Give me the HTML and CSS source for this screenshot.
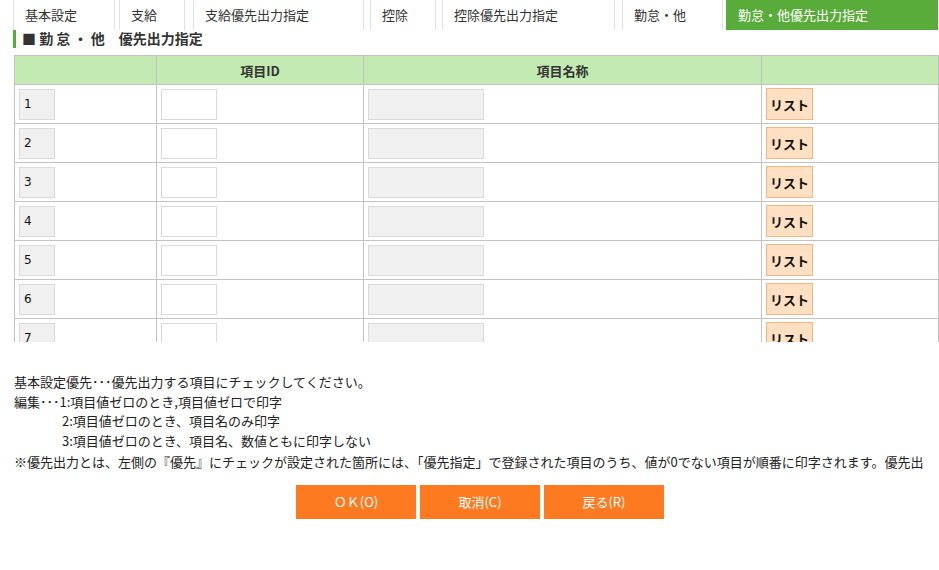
FILE: index.html
```html
<!DOCTYPE html>
<html lang="ja">
<head>
<meta charset="utf-8">
<title>勤怠・他優先出力指定</title>
<link rel="stylesheet" href="styles.css">
</head>
<body>
<nav class="tabs">
  <div class="tab t1">基本設定</div>
  <div class="tab t2">支給</div>
  <div class="tab t3">支給優先出力指定</div>
  <div class="tab t4">控除</div>
  <div class="tab t5">控除優先出力指定</div>
  <div class="tab t6">勤怠・他</div>
  <div class="tab t7 active">勤怠・他優先出力指定</div>
</nav>
<h1 class="title">■ 勤 怠 ・ 他　優先出力指定</h1>
<div class="grid-wrap">
  <table class="grid">
    <thead>
      <tr>
        <th class="c1"></th>
        <th class="c2">項目ID</th>
        <th class="c3">項目名称</th>
        <th class="c4"></th>
      </tr>
    </thead>
    <tbody>
      <tr><td><span class="no">1</span></td><td><span class="idbox"></span></td><td><span class="namebox"></span></td><td><button class="list">リスト</button></td></tr>
      <tr><td><span class="no">2</span></td><td><span class="idbox"></span></td><td><span class="namebox"></span></td><td><button class="list">リスト</button></td></tr>
      <tr><td><span class="no">3</span></td><td><span class="idbox"></span></td><td><span class="namebox"></span></td><td><button class="list">リスト</button></td></tr>
      <tr><td><span class="no">4</span></td><td><span class="idbox"></span></td><td><span class="namebox"></span></td><td><button class="list">リスト</button></td></tr>
      <tr><td><span class="no">5</span></td><td><span class="idbox"></span></td><td><span class="namebox"></span></td><td><button class="list">リスト</button></td></tr>
      <tr><td><span class="no">6</span></td><td><span class="idbox"></span></td><td><span class="namebox"></span></td><td><button class="list">リスト</button></td></tr>
      <tr><td><span class="no">7</span></td><td><span class="idbox"></span></td><td><span class="namebox"></span></td><td><button class="list">リスト</button></td></tr>
    </tbody>
  </table>
</div>
<div class="notes">
  <p>基本設定優先･･･優先出力する項目にチェックしてください。</p>
  <p>編集･･･1:項目値ゼロのとき,項目値ゼロで印字</p>
  <p class="indent">2:項目値ゼロのとき、項目名のみ印字</p>
  <p class="indent">3:項目値ゼロのとき、項目名、数値ともに印字しない</p>
  <p class="remark">※優先出力とは、左側の『優先』にチェックが設定された箇所には、「優先指定」で登録された項目のうち、値が0でない項目が順番に印字されます。優先出</p>
</div>
<div class="actions">
  <button class="act">ＯＫ(O)</button>
  <button class="act">取消(C)</button>
  <button class="act">戻る(R)</button>
</div>
</body>
</html>
```

FILE: styles.css
```css
html, body {
  margin: 0;
  padding: 0;
  background: #fff;
  width: 939px;
  height: 570px;
  overflow: hidden;
}
body {
  font-family: "Noto Sans CJK JP", "Noto Sans", sans-serif;
  color: #222;
  font-size: 12px;
}
.tabs {
  display: flex;
  height: 30px;
  padding-left: 13px;
}
.tab {
  box-sizing: border-box;
  height: 30px;
  line-height: 29px;
  padding-left: 11px;
  font-size: 13px;
  color: #333;
  border-left: 1px solid #e2e2e2;
  border-right: 1px solid #e2e2e2;
  white-space: nowrap;
}
.t1 { width: 102px; }
.t2 { width: 66px; margin-left: 4px; }
.t3 { width: 171px; margin-left: 8px; }
.t4 { width: 66px; margin-left: 6px; }
.t5 { width: 173px; margin-left: 6px; }
.t6 { width: 101px; margin-left: 7px; }
.t7 { width: 212px; margin-left: 3px; }
.tab.active {
  background: #5aac3a;
  color: #fff;
  border-color: #5aac3a;
}
.title {
  margin: 0 0 0 13px;
  height: 18px;
  line-height: 17px;
  padding-left: 6px;
  border-left: 3px solid #5aac3a;
  font-size: 14px;
  font-weight: bold;
  color: #333;
}
.grid-wrap {
  margin: 7px 0 0 14px;
  width: 925px;
  height: 287px;
  overflow: hidden;
}
.grid {
  border-collapse: collapse;
  width: 925px;
  table-layout: fixed;
}
.grid th, .grid td {
  border: 1px solid #c3c3c3;
  padding: 0 4px;
  text-align: left;
}
.grid th {
  background: #c4eab4;
  height: 28px;
  font-size: 13px;
  font-weight: bold;
  color: #333;
  text-align: center;
}
.c1 { width: 133px; }
.c2 { width: 198px; }
.c3 { width: 389px; }
.c4 { width: 168px; }
.grid td {
  height: 38px;
}
.no, .idbox, .namebox {
  display: block;
  box-sizing: border-box;
  height: 31px;
  border: 1px solid #dadada;
}
.no {
  width: 36px;
  background: #f0f0f0;
  font-family: "DejaVu Sans", sans-serif;
  font-size: 12px;
  line-height: 29px;
  padding-left: 4px;
  color: #111;
}
.idbox {
  width: 56px;
  background: #fff;
}
.namebox {
  width: 116px;
  background: #f0f0f0;
}
.list {
  display: block;
  box-sizing: border-box;
  width: 47px;
  height: 32px;
  padding: 0;
  background: #ffe0c2;
  border: 1px solid #f2b684;
  font-family: "Noto Sans CJK JP", sans-serif;
  font-size: 13px;
  font-weight: bold;
  color: #111;
}
.notes {
  margin: 30px 0 0 14px;
  font-size: 13px;
  line-height: 19.5px;
  color: #222;
  white-space: nowrap;
  overflow: hidden;
  width: 925px;
}
.notes p {
  margin: 0;
}
.notes .indent {
  padding-left: 48px;
}
.notes .remark {
  margin-top: 2px;
}
.actions {
  display: flex;
  justify-content: center;
  gap: 4px;
  margin-top: 13px;
  padding-left: 21px;
}
.act {
  width: 120px;
  height: 34px;
  border: none;
  background: #fd7a21;
  color: #fff;
  font-family: "Noto Sans CJK JP", sans-serif;
  font-size: 13px;
  padding: 0;
}
```
